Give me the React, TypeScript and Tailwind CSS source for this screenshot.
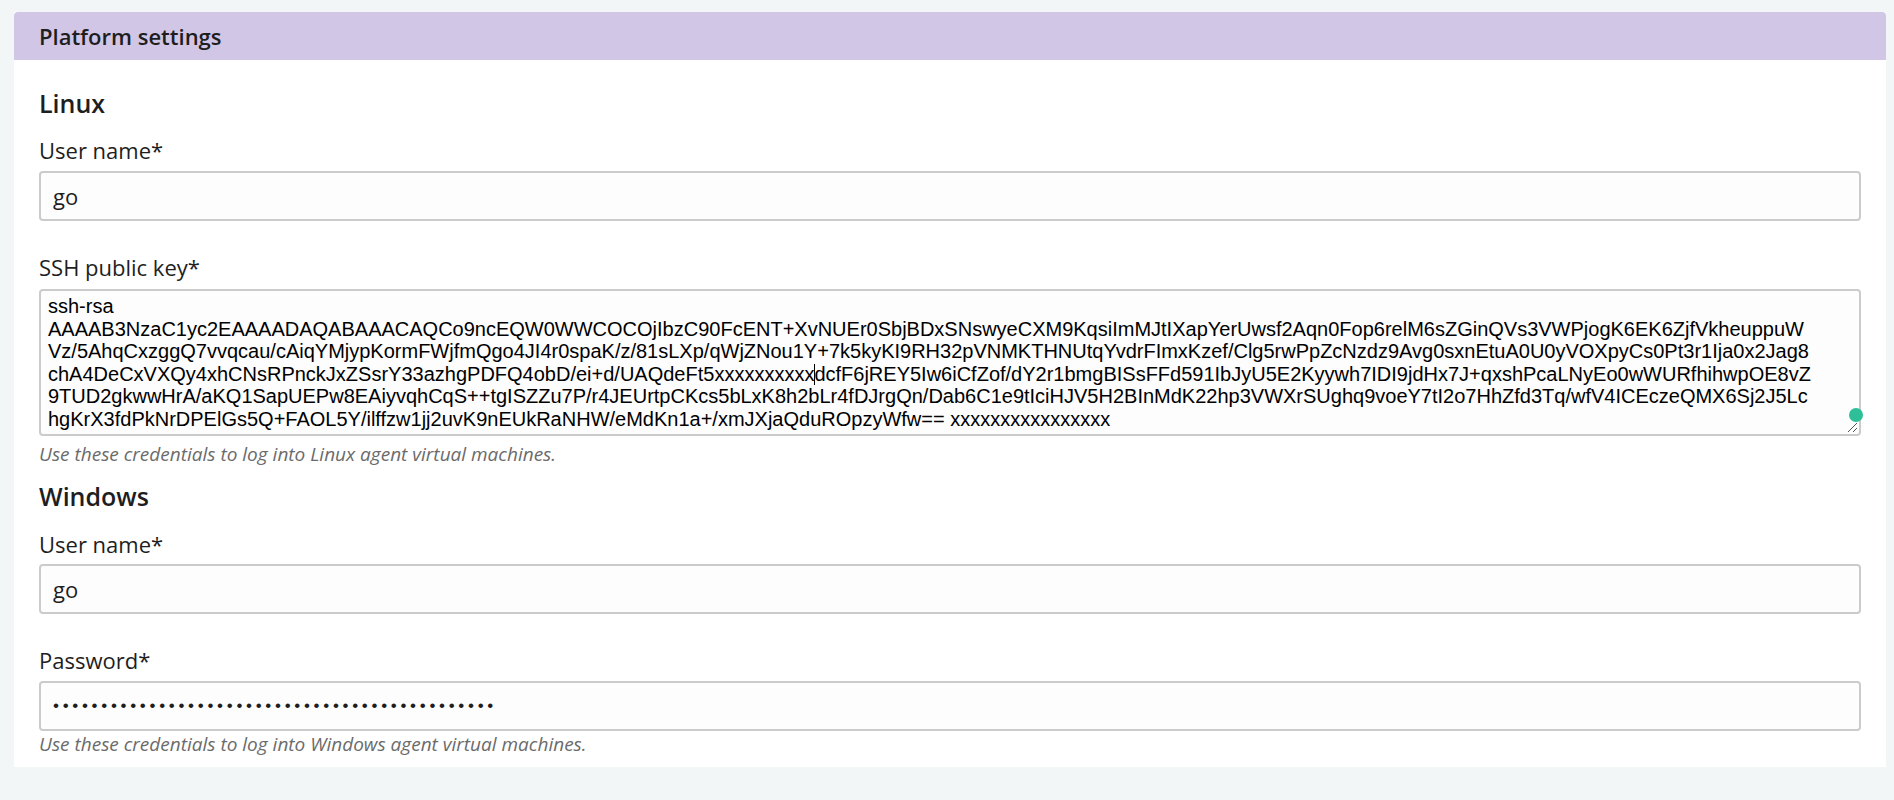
import React from "react";

const keyLines = [
  "ssh-rsa",
  "AAAAB3NzaC1yc2EAAAADAQABAAACAQCo9ncEQW0WWCOCOjIbzC90FcENT+XvNUEr0SbjBDxSNswyeCXM9KqsiImMJtIXapYerUwsf2Aqn0Fop6relM6sZGinQVs3VWPjogK6EK6ZjfVkheuppuW",
  "Vz/5AhqCxzggQ7vvqcau/cAiqYMjypKormFWjfmQgo4JI4r0spaK/z/81sLXp/qWjZNou1Y+7k5kyKI9RH32pVNMKTHNUtqYvdrFImxKzef/Clg5rwPpZcNzdz9Avg0sxnEtuA0U0yVOXpyCs0Pt3r1Ija0x2Jag8",
  "",
  "9TUD2gkwwHrA/aKQ1SapUEPw8EAiyvqhCqS++tgISZZu7P/r4JEUrtpCKcs5bLxK8h2bLr4fDJrgQn/Dab6C1e9tIciHJV5H2BInMdK22hp3VWXrSUghq9voeY7tI2o7HhZfd3Tq/wfV4ICEczeQMX6Sj2J5Lc",
  "hgKrX3fdPkNrDPElGs5Q+FAOL5Y/ilffzw1jj2uvK9nEUkRaNHW/eMdKn1a+/xmJXjaQduROpzyWfw== xxxxxxxxxxxxxxxx",
];

const Label = ({ children, className }: { children: React.ReactNode; className: string }) => (
  <label className={`block text-[22px] leading-[30px] ${className}`}>{children}</label>
);

const TextBox = ({ children, className }: { children: React.ReactNode; className: string }) => (
  <div
    className={`flex h-[50px] items-center rounded-[4px] border-2 border-[#cbcbcb] bg-[#fdfdfd] px-[12px] text-[22px] ${className}`}
  >
    {children}
  </div>
);

const Help = ({ children, className }: { children: React.ReactNode; className: string }) => (
  <p className={`text-[19px] italic leading-[24px] text-[#6b6b6b] ${className}`}>{children}</p>
);

export default function App() {
  return (
    <div className="min-h-[800px] bg-[#f2f6f7] pl-[14px] pr-[8px] pt-[12px] font-['Open_Sans',sans-serif] text-[#1e1e1e]">
      <section className="bg-white pb-[11px]">
        <header className="flex h-[48px] items-center rounded-t-[4px] bg-[#d2c6e7] px-[25px] text-[22px] font-semibold">
          Platform settings
        </header>
        <div className="px-[25px]">
          <h3 className="mt-[27px] text-[25px] font-semibold leading-[32px]">Linux</h3>
          <Label className="mt-[16px]">User name*</Label>
          <TextBox className="mt-[6px]">go</TextBox>

          <Label className="mt-[31px]">SSH public key*</Label>
          <div className="relative mt-[7px] h-[147px] rounded-[4px] border-2 border-[#cbcbcb] bg-[#fdfdfd] px-[7px] pt-[4px] font-['Liberation_Sans',Arial,sans-serif] text-[20px] leading-[22.6px] text-black">
            {keyLines.map((line, i) =>
              i === 3 ? (
                <div key={i} className="whitespace-nowrap">
                  chA4DeCxVXQy4xhCNsRPnckJxZSsrY33azhgPDFQ4obD/ei+d/UAQdeFt5xxxxxxxxxx
                  <span className="-mr-px inline-block h-[21px] w-px bg-black align-[-4px]" />
                  dcfF6jREY5Iw6iCfZof/dY2r1bmgBISsFFd591IbJyU5E2Kyywh7IDI9jdHx7J+qxshPcaLNyEo0wWURfhihwpOE8vZ
                </div>
              ) : (
                <div key={i} className="whitespace-nowrap">
                  {line}
                </div>
              )
            )}
            <span className="absolute bottom-[12px] right-[-4px] h-[14px] w-[14px] rounded-full bg-[#2ebf98]" />
            <svg className="absolute bottom-[1px] right-[1px]" width="12" height="12" viewBox="0 0 12 12">
              <path d="M2 11 L11 2 M7 11 L11 7" stroke="#555" strokeWidth="1" fill="none" />
            </svg>
          </div>
          <Help className="mt-[6px]">Use these credentials to log into Linux agent virtual machines.</Help>

          <h3 className="mt-[14px] text-[25px] font-semibold leading-[32px]">Windows</h3>
          <Label className="mt-[17px]">User name*</Label>
          <TextBox className="mt-[5px]">go</TextBox>

          <Label className="mt-[31px]">Password*</Label>
          <TextBox className="mt-[6px]">
            <span className="font-['Liberation_Sans',Arial,sans-serif] text-[17px] tracking-[3.7px]">
              {"•".repeat(46)}
            </span>
          </TextBox>
          <Help className="mt-[1px]">Use these credentials to log into Windows agent virtual machines.</Help>
        </div>
      </section>
    </div>
  );
}
